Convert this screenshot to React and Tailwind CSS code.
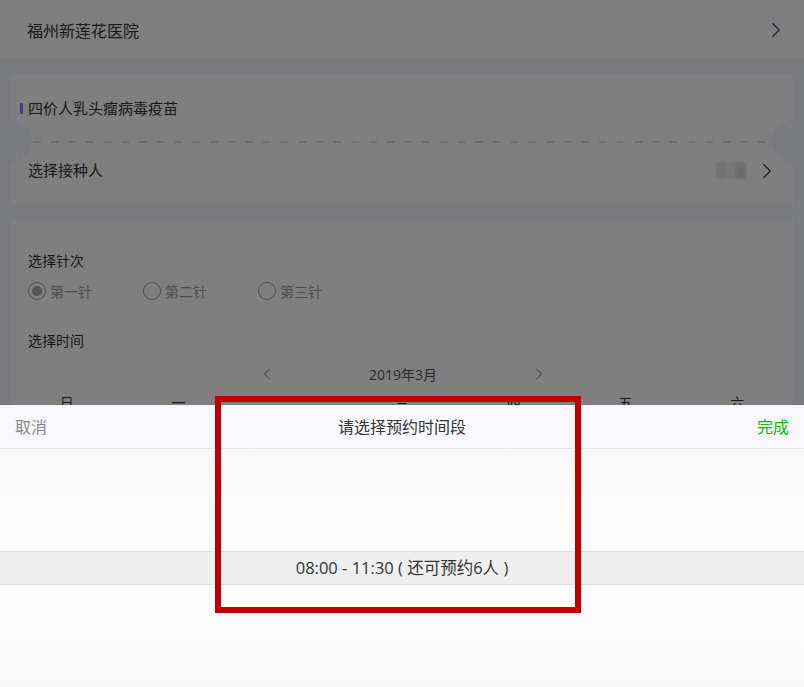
import { ChevronRight, ChevronLeft } from 'lucide-react'

const font = { fontFamily: '"Open Sans", "Noto Sans CJK SC", sans-serif' }

const weekdays = ['日', '一', '二', '三', '四', '五', '六']

function Radio({ label, checked, className = '' }) {
  return (
    <label className={`flex items-center gap-[4px] ${className}`}>
      <span className="grid h-[18px] w-[18px] place-items-center rounded-full border border-[#9a9a9a]">
        {checked && <span className="h-[10px] w-[10px] rounded-full bg-[#a8a8a8]" />}
      </span>
      <span className="text-[14px] text-[#9a9a9a]">{label}</span>
    </label>
  )
}

export default function App() {
  return (
    <div className="relative h-[687px] w-[804px] overflow-hidden bg-[#f5f6fa] text-[#333]" style={font}>
      {/* Hospital row */}
      <div className="flex h-[58px] items-center justify-between bg-white pl-[27px] pr-[15px] pt-[3px]">
        <span className="text-[16px]">福州新莲花医院</span>
        <ChevronRight size={26} strokeWidth={1.1} className="-mt-[2px] text-[#3a3f4d]" />
      </div>

      {/* Vaccine card */}
      <div className="relative mx-[11px] mt-[16px] bg-white">
        <div className="flex h-[67px] items-center pl-[9px] pt-[1px]">
          <span className="mr-[5px] h-[11px] w-[3px] bg-[#6a8cff]" />
          <span className="text-[15px]">四价人乳头瘤病毒疫苗</span>
        </div>
        <div className="mx-[22px] h-[2px] bg-[linear-gradient(to_right,#dcdcdc_45%,transparent_0)] bg-[length:17.7px_2px]" />
        <span className="absolute left-[-21px] top-[46px] h-[42px] w-[42px] rounded-full bg-[#f5f6fa]" />
        <span className="absolute right-[-21px] top-[46px] h-[42px] w-[42px] rounded-full bg-[#f5f6fa]" />
        <div className="flex h-[61px] items-center justify-between pb-[6px] pl-[17px] pr-[13px]">
          <span className="text-[15px]">选择接种人</span>
          <div className="flex items-center gap-[8px]">
            <div className="flex h-[17px] w-[30px] blur-[1px]">
              <span className="h-full w-[10px] bg-[#e4e4e4]" />
              <span className="h-full w-[10px] bg-[#f0f0f0]" />
              <span className="h-full w-[10px] bg-[#dcdcdc]" />
            </div>
            <ChevronRight size={26} strokeWidth={1.1} className="text-[#3a3f4d]" />
          </div>
        </div>
      </div>

      {/* Dose + date card */}
      <div className="mx-[11px] mt-[16px] bg-white px-[17px] pt-[31px]">
        <p className="h-[20px] text-[14px] leading-[20px]">选择针次</p>
        <div className="mt-[10px] flex h-[20px] items-center">
          <Radio label="第一针" checked className="w-[115px]" />
          <Radio label="第二针" className="w-[115px]" />
          <Radio label="第三针" />
        </div>
        <p className="mt-[30px] h-[20px] text-[14px] leading-[20px]">选择时间</p>
        <div className="mt-[12px] flex h-[22px] items-center justify-center gap-[92px] pl-[2px] text-[#555]">
          <ChevronLeft size={20} strokeWidth={1.4} className="text-[#aaa]" />
          <span className="text-[14px]">2019年3月</span>
          <ChevronRight size={20} strokeWidth={1.4} className="text-[#aaa]" />
        </div>
        <div className="-mx-[17px] mt-[8px] grid grid-cols-7 text-center text-[14px] leading-[20px]">
          {weekdays.map((d) => (
            <span key={d}>{d}</span>
          ))}
        </div>
        <div className="h-[200px]" />
      </div>

      {/* Mask */}
      <div className="absolute inset-0 bg-black/50" />

      {/* Picker sheet */}
      <div className="absolute inset-x-0 bottom-0 flex h-[282px] flex-col bg-white">
        <div className="flex h-[44px] items-center justify-between border-b border-[#e6e6ea] bg-[#f9f8fd] px-[15px] text-[16px]">
          <span className="text-[#888]">取消</span>
          <span className="text-[#333]">请选择预约时间段</span>
          <span className="text-[#09bb07]">完成</span>
        </div>
        <div className="flex flex-1 flex-col">
          <div className="h-[102px] bg-[linear-gradient(to_bottom,#f8f8f8,#fdfdfd)]" />
          <div className="flex h-[34px] items-center justify-center border-y border-[#dcdcdc] bg-[#efefef] text-[16.5px] text-[#333]">
            08:00 - 11:30 ( 还可预约6人 )
          </div>
          <div className="flex-1 bg-[linear-gradient(to_bottom,#fdfdfd,#f8f8f8)]" />
        </div>
      </div>

      {/* Highlight box */}
      <div className="absolute left-[215px] top-[396px] h-[217px] w-[366px] border-[6px] border-[#c00000]" />
    </div>
  )
}
